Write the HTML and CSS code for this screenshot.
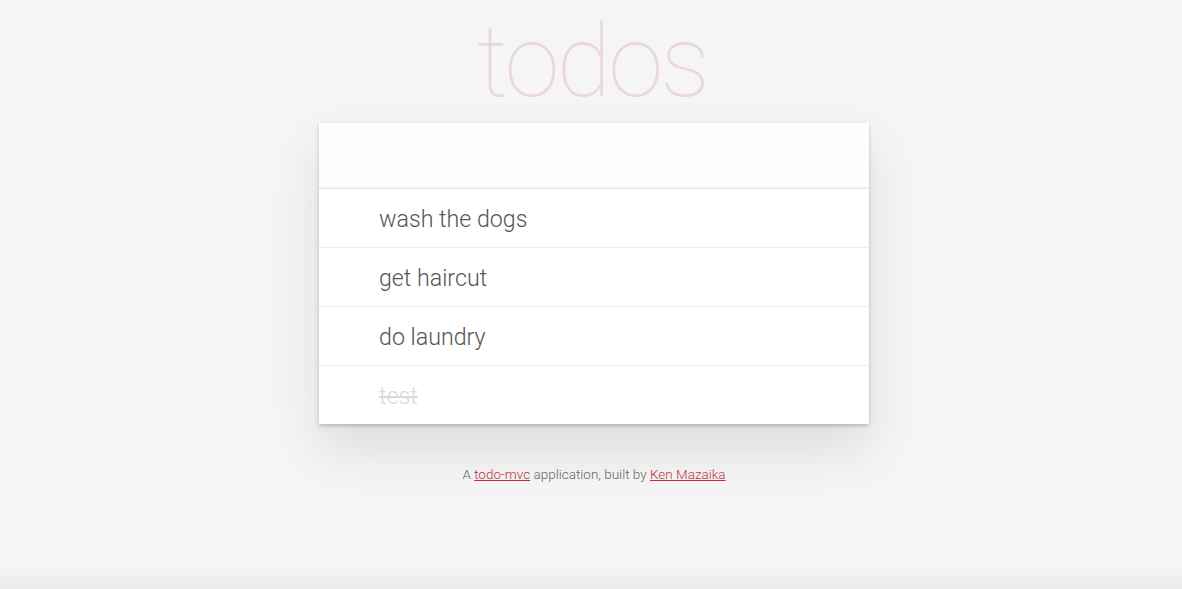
FILE: index.html
```html
<!DOCTYPE html>
<html lang="en">
<head>
<meta charset="utf-8">
<title>todos</title>
<link rel="stylesheet" href="styles.css">
</head>
<body>
<div class="page">
  <section class="todoapp">
    <header class="header">
      <h1 class="title">todos</h1>
    </header>
    <div class="card">
      <input class="new-todo" type="text" aria-label="New todo">
      <ul class="todo-list">
        <li class="todo">wash the dogs</li>
        <li class="todo">get haircut</li>
        <li class="todo">do laundry</li>
        <li class="todo completed">test</li>
      </ul>
    </div>
  </section>
  <footer class="info">
    A <a href="#">todo-mvc</a> application, built by <a href="#">Ken Mazaika</a>
  </footer>
</div>
<div class="bottom-band"></div>
</body>
</html>
```

FILE: styles.css
```css
html, body {
  margin: 0;
  padding: 0;
}
body {
  background: #f5f5f5;
  font-family: Roboto, "Liberation Sans", Arial, sans-serif;
  color: #4d4d4d;
  height: 100vh;
  display: flex;
  flex-direction: column;
  overflow: hidden;
}
.page {
  flex: 1;
  display: flex;
  flex-direction: column;
  align-items: center;
  padding-left: 6px;
}
.todoapp {
  width: 550px;
  display: flex;
  flex-direction: column;
}
.header {
  height: 123px;
  display: flex;
  justify-content: center;
}
.title {
  margin: 0 0 0 -4px;
  font-size: 100px;
  font-weight: 100;
  line-height: 124px;
  color: rgba(175, 47, 47, 0.15);
  text-align: center;
  letter-spacing: -3px;
}
.card {
  background: #fff;
  box-shadow: 0 2px 4px 0 rgba(0, 0, 0, 0.2), 0 25px 50px 0 rgba(0, 0, 0, 0.1);
}
.new-todo {
  display: block;
  width: 100%;
  box-sizing: border-box;
  height: 65px;
  border: none;
  outline: none;
  padding: 16px 16px 16px 60px;
  font-size: 24px;
  font-family: inherit;
  font-weight: 300;
  background: rgba(0, 0, 0, 0.003);
  box-shadow: inset 0 -2px 1px rgba(0, 0, 0, 0.03);
}
.todo-list {
  list-style: none;
  margin: 0;
  padding: 0;
  border-top: 1px solid #e6e6e6;
}
.todo {
  height: 57px;
  padding-top: 1px;
  padding-left: 60px;
  display: flex;
  align-items: center;
  font-size: 23.2px;
  font-weight: 300;
  color: #555;
  border-bottom: 1px solid #ededed;
}
.todo:last-child {
  border-bottom: none;
}
.todo.completed {
  color: #d9d9d9;
  text-decoration: line-through;
}
.info {
  margin-top: 42px;
  font-size: 13.5px;
  font-weight: 300;
  color: #666;
  text-align: center;
}
.info a {
  color: #c0313a;
  text-decoration: underline;
}
.bottom-band {
  height: 24px;
  background: linear-gradient(#f4f4f4, #ececec);
}
```
